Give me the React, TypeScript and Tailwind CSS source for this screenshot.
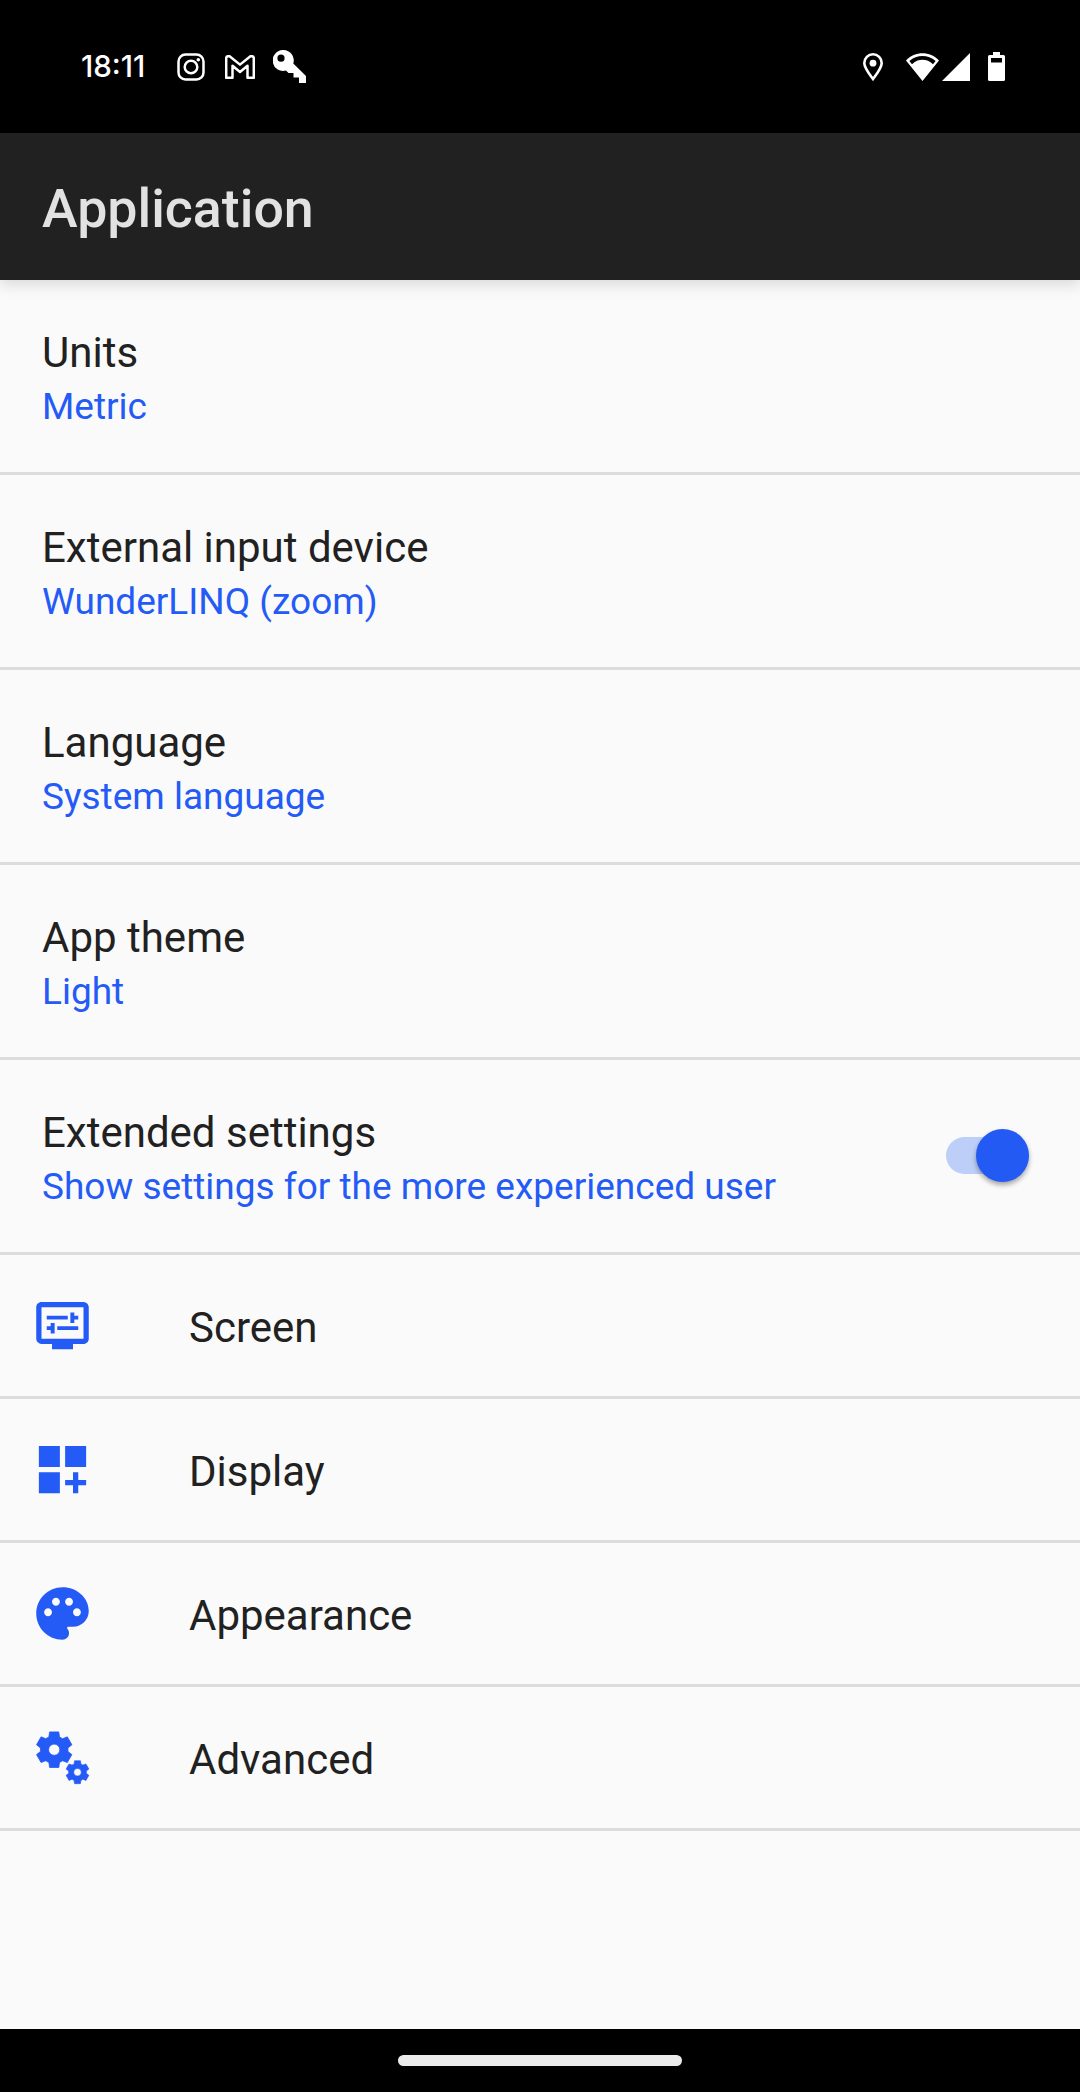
import { MdDisplaySettings, MdDashboardCustomize, MdPalette } from "react-icons/md";

const settings = [
  { title: "Units", value: "Metric" },
  { title: "External input device", value: "WunderLINQ (zoom)" },
  { title: "Language", value: "System language" },
  { title: "App theme", value: "Light" },
  { title: "Extended settings", value: "Show settings for the more experienced user", toggle: true },
];

// Six-toothed cog outline with a round hole.
function cog(cx: number, cy: number, r: number, hole: number) {
  const body = r * 0.77;
  const pts: string[] = [];
  for (let i = 0; i < 6; i++) {
    const a = (i * 60 - 90) * (Math.PI / 180);
    const at = (rad: number, deg: number) => {
      const t = a + deg * (Math.PI / 180);
      return `${(cx + rad * Math.cos(t)).toFixed(2)} ${(cy + rad * Math.sin(t)).toFixed(2)}`;
    };
    pts.push(at(body, -22.5), at(r * 1.02, -14.5), at(r * 1.02, 14.5), at(body, 22.5));
  }
  return `M${pts.join("L")}ZM${cx - hole} ${cy}a${hole} ${hole} 0 1 0 ${hole * 2} 0a${hole} ${hole} 0 1 0 ${-hole * 2} 0Z`;
}

function Cogs() {
  return (
    <svg viewBox="0 0 63 63" className="size-[63px]" fill="currentColor" stroke="currentColor" strokeLinejoin="round" fillRule="evenodd">
      <path strokeWidth="0.8" d={cog(23.2, 23.7, 18, 5.6)} />
      <path strokeWidth="0.6" d={cog(46.5, 46.2, 11.6, 3.8)} />
    </svg>
  );
}

const links = [
  { label: "Screen", icon: <MdDisplaySettings className="size-[63px]" /> },
  { label: "Display", icon: <MdDashboardCustomize className="size-[63px]" /> },
  { label: "Appearance", icon: <MdPalette className="size-[63px]" /> },
  { label: "Advanced", icon: <Cogs /> },
];

function StatusBar() {
  return (
    <div className="flex h-[133px] shrink-0 items-center bg-black pl-[81px] pr-[75px] text-white">
      <span className="w-[95px] whitespace-nowrap font-[Inter] text-[29.5px] font-medium">18:11</span>
      <svg viewBox="0 0 28 28" className="ml-px size-[28px]" fill="none" stroke="currentColor" strokeWidth="2.5">
        <rect x="1.5" y="1.5" width="25" height="25" rx="7" />
        <circle cx="14" cy="14" r="6.3" />
        <circle cx="21.3" cy="6.7" r="1.8" fill="currentColor" stroke="none" />
      </svg>
      <svg viewBox="0 0 30 24" className="ml-[20px] h-[24px] w-[30px]" fill="none" stroke="currentColor" strokeWidth="2.5" strokeLinejoin="round">
        <path d="M1.2 22.8V3.2Q1.2 1.2 3.2 1.2H4.6L15 9.6L25.4 1.2H26.8Q28.8 1.2 28.8 3.2V22.8H22.5V10.8L15 17L7.5 10.8V22.8Z" />
      </svg>
      <svg viewBox="0 0 33 33" className="ml-[18px] size-[33px]" fill="currentColor" fillRule="evenodd">
        <path d="M10.5 0A10.5 10.5 0 1 0 13 20.6L15.5 23H20.5V27.5H26V33H33V26L20.3 13.6A10.5 10.5 0 0 0 10.5 0ZM8 4.6A3.6 3.6 0 1 1 8 11.8A3.6 3.6 0 1 1 8 4.6Z" />
      </svg>
      <svg viewBox="0 0 20 28" className="ml-auto h-[28px] w-[20px]" fill="none" stroke="currentColor" strokeWidth="2.6">
        <path d="M10 26C6 20.5 1.3 15 1.3 10A8.7 8.7 0 0 1 18.7 10C18.7 15 14 20.5 10 26Z" />
        <circle cx="10" cy="10.2" r="3.4" fill="currentColor" stroke="none" />
      </svg>
      <svg viewBox="0 0 33 28" className="ml-[23px] h-[28px] w-[33px]" fill="currentColor" fillRule="evenodd">
        <path d="M0 7.5C9-2.2 24-2.2 33 7.5L16.5 28ZM3.4 8L6 11.2C12 5.4 21 5.4 27 11.2L29.6 8C22 1.2 11 1.2 3.4 8Z" />
      </svg>
      <svg viewBox="0 0 28 28" className="ml-[3px] size-[28px]" fill="currentColor">
        <path d="M28 0V28H0Z" />
      </svg>
      <svg viewBox="0 0 17 29" className="ml-[18px] h-[29px] w-[17px]" fill="currentColor" fillRule="evenodd">
        <path d="M5 0H12V3H15.5Q17 3 17 4.5V27.5Q17 29 15.5 29H1.5Q0 29 0 27.5V4.5Q0 3 1.5 3H5ZM3 6V10.5H14V6Z" />
      </svg>
    </div>
  );
}

function Toggle() {
  return (
    <div className="mr-[51px] mb-[2px] flex h-[53px] w-[83px] items-center justify-end">
      <div className="flex h-[37px] w-[83px] items-center justify-end rounded-full bg-[#bdcff8]">
        <div className="size-[53px] shrink-0 rounded-full bg-[#245af4] shadow-[0_3px_5px_rgba(0,0,0,0.35)]" />
      </div>
    </div>
  );
}

export default function App() {
  return (
    <div className="flex h-[2092px] w-[1080px] flex-col overflow-hidden bg-[#fafafa] font-[Roboto,sans-serif] text-[#212121]">
      <StatusBar />
      <header className="z-10 flex h-[147px] shrink-0 items-center bg-[#212121] pl-[42px] shadow-[0_4px_14px_rgba(0,0,0,0.14)]">
        <h1 className="mt-[5px] text-[53.7px] font-medium leading-[62px] text-[#e2e2e2]">Application</h1>
      </header>
      <main className="grow">
        {settings.map((s) => (
          <div key={s.title} className="flex h-[195px] items-center border-b-[3px] border-[#dcdcdc] pl-[42px]">
            <div className="grow pt-[5px]">
              <div className="text-[42px] leading-[56px]">{s.title}</div>
              <div className="pt-px text-[37px] leading-[50px] text-[#245af6]">{s.value}</div>
            </div>
            {s.toggle && <Toggle />}
          </div>
        ))}
        {links.map((l) => (
          <div key={l.label} className="flex h-[144px] items-center border-b-[3px] border-[#dcdcdc] pl-[31px]">
            <div className="w-[158px] text-[#245af6]">{l.icon}</div>
            <div className="pt-[5px] text-[42px] leading-[56px]">{l.label}</div>
          </div>
        ))}
      </main>
      <footer className="flex h-[63px] shrink-0 items-center justify-center bg-black">
        <div className="h-[11px] w-[284px] rounded-full bg-[#ebebeb]" />
      </footer>
    </div>
  );
}
